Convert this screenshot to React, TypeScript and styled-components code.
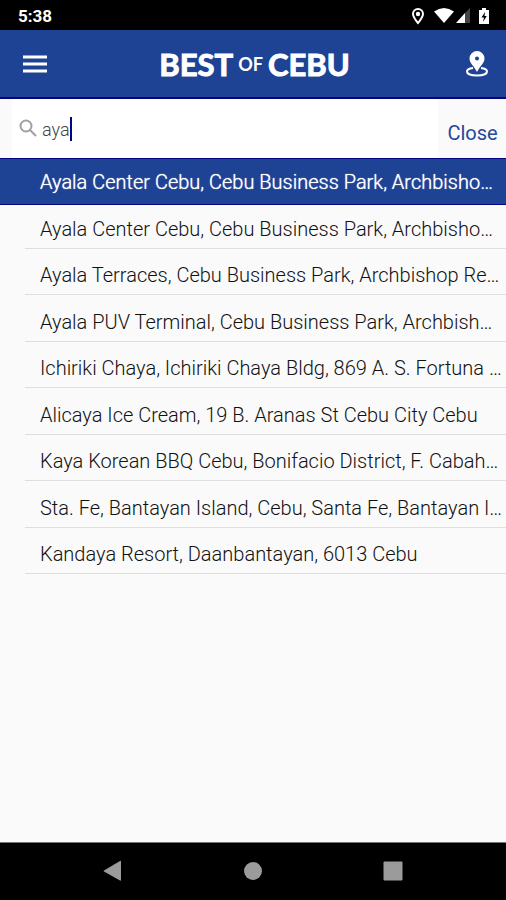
import React, { useState } from "react";
import styled, { createGlobalStyle, css } from "styled-components";

const blue = "#1e4394";
const navy = "#040482";

const GlobalStyle = createGlobalStyle`
  *, *::before, *::after { box-sizing: border-box; }
  body { margin: 0; background: #fafafa; font-family: Roboto, "Liberation Sans", sans-serif; }
  button { border: 0; padding: 0; background: none; font: inherit; color: inherit; cursor: pointer; }
`;

const Screen = styled.div`
  display: flex;
  flex-direction: column;
  min-height: 100vh;
`;

const StatusBar = styled.div`
  display: flex;
  align-items: center;
  justify-content: space-between;
  height: 30px;
  padding: 2px 14px 0 18px;
  background: #000;
  color: #fff;
  font-size: 17px;
  font-weight: 700;
`;

const StatusIcons = styled.div`
  display: flex;
  align-items: center;
`;

const Header = styled.header`
  display: flex;
  align-items: center;
  justify-content: space-between;
  height: 69px;
  padding: 0 17px 0 22px;
  background: ${blue};
  border-bottom: 2px solid ${navy};
  color: #fff;
`;

const IconButton = styled.button`
  display: flex;
`;

const Logo = styled.h1`
  display: flex;
  align-items: center;
  gap: 5px;
  margin: 0;
  padding-right: 3px;
  font: 700 31px/40px Lato, sans-serif;
  -webkit-text-stroke: 1px #fff;
`;

const LogoSmall = styled.span`
  font-size: 18px;
  font-weight: 700;
  -webkit-text-stroke: 0;
`;

const SearchBar = styled.form`
  display: flex;
  height: 59px;
  padding-left: 12px;
`;

const SearchField = styled.label`
  display: flex;
  flex: 1;
  align-items: center;
  padding-left: 7px;
  background: #fff;
`;

const SearchInput = styled.input`
  field-sizing: content;
  min-width: 2px;
  margin-left: 4px;
  padding: 2px 0 0;
  border: 0;
  outline: 0;
  background: none;
  color: #444;
  caret-color: transparent;
  font: 300 18px/24px Roboto, sans-serif;
`;

const Caret = styled.span`
  width: 2px;
  height: 24px;
  background: ${navy};
`;

const CloseButton = styled.button`
  width: 68px;
  padding: 9px 0 0 1px;
  color: #27479a;
  font-size: 20px;
`;

const Results = styled.ul`
  flex: 1;
  margin: 0;
  padding: 0;
  list-style: none;
`;

const ResultItem = styled.li<{ $selected: boolean }>`
  padding-left: 25px;
  ${({ $selected }) =>
    $selected &&
    css`
      margin-bottom: -3px;
      padding-bottom: 3px;
      background: ${blue};
      border-top: 1px solid ${navy};
      border-bottom: 1px solid ${navy};
      color: #fff;
    `}
`;

const ResultButton = styled.button<{ $selected: boolean }>`
  display: block;
  width: 100%;
  height: ${({ $selected }) => ($selected ? "42px" : "46px")};
  padding: ${({ $selected }) => ($selected ? "10px" : "13px")} 2px 6px 15px;
  border-bottom: ${({ $selected }) => ($selected ? "0" : "1px solid #dedede")};
  color: ${({ $selected }) => ($selected ? "#fff" : "#111")};
  font-size: 20px;
  font-weight: 300;
  text-shadow: ${({ $selected }) => ($selected ? "0 0 1px #fff" : "none")};
  line-height: 26px;
  text-align: left;
  overflow: hidden;
  text-overflow: ellipsis;
  white-space: nowrap;

  li:nth-child(even) > & {
    height: 47px;
  }
`;

const NavBar = styled.nav`
  display: grid;
  grid-template-columns: repeat(3, 140px);
  justify-content: center;
  height: 58px;
  padding-bottom: 2px;
  background: #000;
  border-top: 1px solid #777;
`;

const NavButton = styled.button`
  display: grid;
  place-items: center;
`;

const places = [
  "Ayala Center Cebu, Cebu Business Park, Archbisho…",
  "Ayala Center Cebu, Cebu Business Park, Archbisho…",
  "Ayala Terraces, Cebu Business Park, Archbishop Re…",
  "Ayala PUV Terminal, Cebu Business Park, Archbish…",
  "Ichiriki Chaya, Ichiriki Chaya Bldg, 869 A. S. Fortuna …",
  "Alicaya Ice Cream, 19 B. Aranas St Cebu City Cebu",
  "Kaya Korean BBQ Cebu, Bonifacio District, F. Cabah…",
  "Sta. Fe, Bantayan Island, Cebu, Santa Fe, Bantayan I…",
  "Kandaya Resort, Daanbantayan, 6013 Cebu",
];

const StatusGlyphs = () => (
  <svg width="80" height="18" viewBox="0 0 80 18" fill="#fff" aria-hidden="true">
    <path
      fillRule="evenodd"
      d="M6 1a6 6 0 0 0-6 6c0 4 6 10.500 6 10.500S12 11 12 7a6 6 0 0 0-6-6Zm0 2a4 4 0 0 1 4 4c0 2-2.400 5.500-4 7.400C4.400 12.500 2 9 2 7a4 4 0 0 1 4-4Z"
    />
    <circle cx="6" cy="7" r="2.200" />
    <path d="M22 4.500q10-7 20 0L32 16Z" />
    <path d="M58 1v15h-5V6Z" fill="#444" />
    <path d="M44 16 53 6v10Z" />
    <path d="M67 3h3V1h4v2h3v14H67Z" />
    <path d="m73 5-3.500 5.500H72L71 15l3.800-6H72.500Z" fill="#000" />
  </svg>
);

export default function App() {
  const [query, setQuery] = useState("aya");
  const [selected, setSelected] = useState(0);

  return (
    <Screen>
      <GlobalStyle />
      <StatusBar>
        <span>5:38</span>
        <StatusIcons>
          <StatusGlyphs />
        </StatusIcons>
      </StatusBar>
      <Header>
        <IconButton aria-label="Menu">
          <svg width="25" height="20" viewBox="0 0 25 20" fill="none" stroke="#fff" strokeWidth="3">
            <path d="M1 3h24M1 10h24M1 17h24" />
          </svg>
        </IconButton>
        <Logo>
          <span>BEST</span>
          <LogoSmall>OF</LogoSmall>
          <span>CEBU</span>
        </Logo>
        <IconButton aria-label="Map">
          <svg width="24" height="28" viewBox="0 0 24 28">
            <path
              d="M8 18C4 18.500 2 20 2 21.500 2 24 6.500 25.500 12 25.500s10-1.500 10-4c0-1.500-2-3-6-3.500"
              fill="none"
              stroke="#fff"
              strokeWidth="2"
            />
            <path
              fill="#fff"
              fillRule="evenodd"
              d="M12 1a7.500 7.500 0 0 0-7.500 7.500C4.500 13 9 16 12 22c3-6 7.500-9 7.500-13.500A7.500 7.500 0 0 0 12 1Zm0 5.500a2 2 0 1 1 0 4 2 2 0 0 1 0-4Z"
            />
          </svg>
        </IconButton>
      </Header>
      <SearchBar onSubmit={(e: React.FormEvent) => e.preventDefault()}>
        <SearchField>
          <svg width="19" height="19" viewBox="0 0 19 19" fill="none" stroke="#a0a0a0" strokeWidth="2">
            <circle cx="7" cy="7" r="5.500" />
            <path d="m11 11 6 6" />
          </svg>
          <SearchInput
            aria-label="Search places"
            value={query}
            onChange={(e: React.ChangeEvent<HTMLInputElement>) => setQuery(e.target.value)}
          />
          <Caret />
        </SearchField>
        <CloseButton type="button" onClick={() => setQuery("")}>
          Close
        </CloseButton>
      </SearchBar>
      <Results>
        {places.map((place, i) => (
          <ResultItem key={i} $selected={i === selected}>
            <ResultButton $selected={i === selected} onClick={() => setSelected(i)}>
              {place}
            </ResultButton>
          </ResultItem>
        ))}
      </Results>
      <NavBar aria-label="System">
        <NavButton aria-label="Back">
          <svg width="20" height="22" viewBox="0 0 20 22" fill="#9b9b9b">
            <path d="M18 2v18q0 1-1 .500L1 11.500Q0 11 1 10.500L17 1q1-.500 1 .500Z" />
          </svg>
        </NavButton>
        <NavButton aria-label="Home">
          <svg width="20" height="20" viewBox="0 0 20 20" fill="#9b9b9b">
            <circle cx="10" cy="10" r="9" />
          </svg>
        </NavButton>
        <NavButton aria-label="Recent apps">
          <svg width="20" height="20" viewBox="0 0 20 20" fill="#9b9b9b">
            <rect x="0.500" y="0.500" width="19" height="19" rx="1" />
          </svg>
        </NavButton>
      </NavBar>
    </Screen>
  );
}
